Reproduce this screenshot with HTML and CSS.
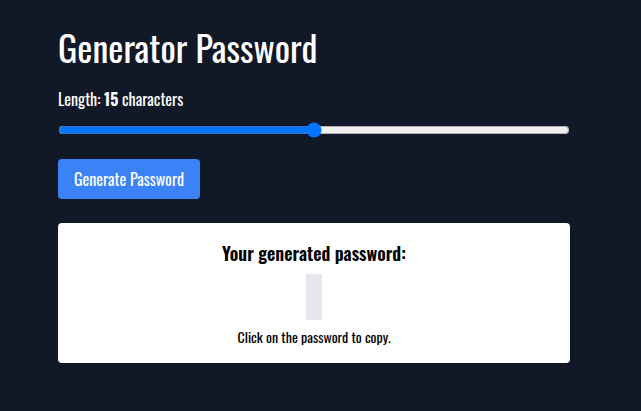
FILE: index.html
```html
<!DOCTYPE html>
<html lang="en">
<head>
<meta charset="utf-8">
<meta name="viewport" content="width=device-width, initial-scale=1">
<title>Generator Password</title>
<link rel="stylesheet" href="styles.css">
</head>
<body>
<main class="container">
  <h1 class="title">Generator Password</h1>
  <form class="form">
    <label class="length-label" for="length">Length: <strong>15</strong> characters</label>
    <input class="slider" type="range" id="length" min="10" max="20" value="15">
    <button class="button" type="button">Generate Password</button>
  </form>
  <section class="result">
    <h2 class="result-title">Your generated password:</h2>
    <div class="password"></div>
    <p class="hint">Click on the password to copy.</p>
  </section>
</main>
</body>
</html>
```

FILE: styles.css
```css
* {
  box-sizing: border-box;
  margin: 0;
}

body {
  padding-right: 13px;
  background: #111827;
  color: #fff;
  font-family: Oswald, "Open Sans Condensed", "Roboto Condensed", "DejaVu Sans Condensed", "Liberation Sans Narrow", sans-serif;
  font-size: 16px;
  line-height: 24px;
}

.container {
  max-width: 576px;
  margin: 0 auto;
  padding: 23px 32px;
}

.title {
  font-size: 36px;
  font-weight: 400;
  line-height: 48px;
  margin-bottom: 16px;
}

.form {
  display: flex;
  flex-direction: column;
  align-items: flex-start;
}

.slider {
  width: 100%;
  height: 16px;
  margin: 11px 0 21px;
  accent-color: #0075ff;
}

.button {
  height: 40px;
  padding: 8px 16px;
  border: 0;
  border-radius: 4px;
  background: #3b82f6;
  color: #fff;
  font: inherit;
}

.result {
  display: flex;
  flex-direction: column;
  align-items: center;
  margin-top: 24px;
  padding: 16px;
  border-radius: 4px;
  background: #fff;
  color: #000;
}

.result-title {
  font-size: 18px;
  font-weight: 600;
  line-height: 28px;
}

.password {
  width: 16px;
  height: 46px;
  margin: 7px 0;
  background: #e5e7eb;
}

.hint {
  font-size: 14px;
  line-height: 20px;
}
```
